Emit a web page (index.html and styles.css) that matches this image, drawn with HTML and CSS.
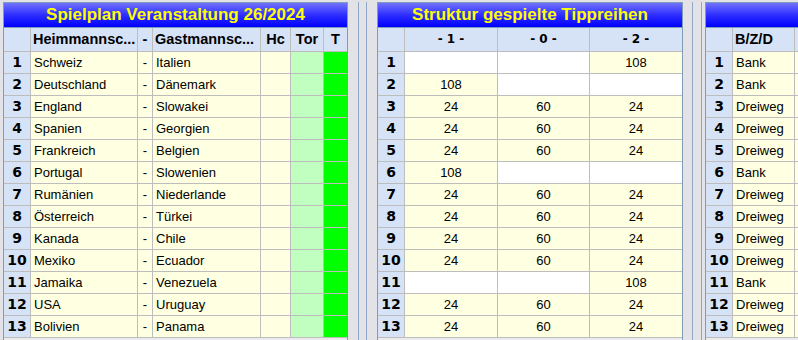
FILE: index.html
```html
<!DOCTYPE html>
<html>
<head>
<meta charset="utf-8">
<link rel="stylesheet" href="styles.css">
</head>
<body>
<div class="desk">
  <div class="panel p1">
    <div class="title">Spielplan Veranstaltung 26/2024</div>
    <div class="grid g1">
      <div class="hd"></div><div class="hd l">Heimmannsc...</div><div class="hd c">-</div><div class="hd l">Gastmannsc...</div><div class="hd c">Hc</div><div class="hd c">Tor</div><div class="hd c">T</div>
      <div class="rn">1</div><div class="y">Schweiz</div><div class="y c">-</div><div class="y">Italien</div><div class="y"></div><div class="lg"></div><div class="gr"></div>
      <div class="rn">2</div><div class="y">Deutschland</div><div class="y c">-</div><div class="y">Dänemark</div><div class="y"></div><div class="lg"></div><div class="gr"></div>
      <div class="rn">3</div><div class="y">England</div><div class="y c">-</div><div class="y">Slowakei</div><div class="y"></div><div class="lg"></div><div class="gr"></div>
      <div class="rn">4</div><div class="y">Spanien</div><div class="y c">-</div><div class="y">Georgien</div><div class="y"></div><div class="lg"></div><div class="gr"></div>
      <div class="rn">5</div><div class="y">Frankreich</div><div class="y c">-</div><div class="y">Belgien</div><div class="y"></div><div class="lg"></div><div class="gr"></div>
      <div class="rn">6</div><div class="y">Portugal</div><div class="y c">-</div><div class="y">Slowenien</div><div class="y"></div><div class="lg"></div><div class="gr"></div>
      <div class="rn">7</div><div class="y">Rumänien</div><div class="y c">-</div><div class="y">Niederlande</div><div class="y"></div><div class="lg"></div><div class="gr"></div>
      <div class="rn">8</div><div class="y">Österreich</div><div class="y c">-</div><div class="y">Türkei</div><div class="y"></div><div class="lg"></div><div class="gr"></div>
      <div class="rn">9</div><div class="y">Kanada</div><div class="y c">-</div><div class="y">Chile</div><div class="y"></div><div class="lg"></div><div class="gr"></div>
      <div class="rn">10</div><div class="y">Mexiko</div><div class="y c">-</div><div class="y">Ecuador</div><div class="y"></div><div class="lg"></div><div class="gr"></div>
      <div class="rn">11</div><div class="y">Jamaika</div><div class="y c">-</div><div class="y">Venezuela</div><div class="y"></div><div class="lg"></div><div class="gr"></div>
      <div class="rn">12</div><div class="y">USA</div><div class="y c">-</div><div class="y">Uruguay</div><div class="y"></div><div class="lg"></div><div class="gr"></div>
      <div class="rn">13</div><div class="y">Bolivien</div><div class="y c">-</div><div class="y">Panama</div><div class="y"></div><div class="lg"></div><div class="gr"></div>
    </div>
  </div>
  <div class="split s1"></div>
  <div class="panel p2">
    <div class="title">Struktur gespielte Tippreihen</div>
    <div class="grid g2">
      <div class="hd"></div><div class="hd sm c">- 1 -</div><div class="hd sm c">- 0 -</div><div class="hd sm c">- 2 -</div>
      <div class="rn">1</div><div class="w"></div><div class="w"></div><div class="y c">108</div>
      <div class="rn">2</div><div class="y c">108</div><div class="w"></div><div class="w"></div>
      <div class="rn">3</div><div class="y c">24</div><div class="y c">60</div><div class="y c">24</div>
      <div class="rn">4</div><div class="y c">24</div><div class="y c">60</div><div class="y c">24</div>
      <div class="rn">5</div><div class="y c">24</div><div class="y c">60</div><div class="y c">24</div>
      <div class="rn">6</div><div class="y c">108</div><div class="w"></div><div class="w"></div>
      <div class="rn">7</div><div class="y c">24</div><div class="y c">60</div><div class="y c">24</div>
      <div class="rn">8</div><div class="y c">24</div><div class="y c">60</div><div class="y c">24</div>
      <div class="rn">9</div><div class="y c">24</div><div class="y c">60</div><div class="y c">24</div>
      <div class="rn">10</div><div class="y c">24</div><div class="y c">60</div><div class="y c">24</div>
      <div class="rn">11</div><div class="w"></div><div class="w"></div><div class="y c">108</div>
      <div class="rn">12</div><div class="y c">24</div><div class="y c">60</div><div class="y c">24</div>
      <div class="rn">13</div><div class="y c">24</div><div class="y c">60</div><div class="y c">24</div>
    </div>
  </div>
  <div class="split s2"></div>
  <div class="panel p3">
    <div class="title"></div>
    <div class="grid g3">
      <div class="hd"></div><div class="hd l">B/Z/D</div><div class="hd"></div>
      <div class="rn">1</div><div class="y">Bank</div><div class="y"></div>
      <div class="rn">2</div><div class="y">Bank</div><div class="y"></div>
      <div class="rn">3</div><div class="y">Dreiweg</div><div class="y"></div>
      <div class="rn">4</div><div class="y">Dreiweg</div><div class="y"></div>
      <div class="rn">5</div><div class="y">Dreiweg</div><div class="y"></div>
      <div class="rn">6</div><div class="y">Bank</div><div class="y"></div>
      <div class="rn">7</div><div class="y">Dreiweg</div><div class="y"></div>
      <div class="rn">8</div><div class="y">Dreiweg</div><div class="y"></div>
      <div class="rn">9</div><div class="y">Dreiweg</div><div class="y"></div>
      <div class="rn">10</div><div class="y">Dreiweg</div><div class="y"></div>
      <div class="rn">11</div><div class="y">Bank</div><div class="y"></div>
      <div class="rn">12</div><div class="y">Dreiweg</div><div class="y"></div>
      <div class="rn">13</div><div class="y">Dreiweg</div><div class="y"></div>
    </div>
  </div>
</div>
</body>
</html>
```
FILE: styles.css
```css
html, body {
  margin: 0;
  padding: 0;
  background: #e3e2e7;
  overflow: hidden;
  width: 798px;
  height: 340px;
}
.desk {
  display: flex;
  align-items: flex-start;
  padding: 2px 0 0 3px;
  font-family: "Liberation Sans", Arial, sans-serif;
  font-size: 13px;
  color: #000;
}
.panel {
  flex: none;
  border: 1px solid #7f9db9;
  border-bottom: none;
  background: #ebebee;
  height: 340px;
  overflow: hidden;
}
.p1 { width: 343px; }
.p2 { width: 304px; }
.p3 { width: 100px; border-right: none; }
.title {
  height: 24px;
  border-bottom: 1px solid #7f9db9;
  background: linear-gradient(#7272ff, #2e2eff 50%, #0000ff);
  color: #ffff00;
  font-weight: bold;
  font-size: 17px;
  line-height: 24px;
  text-align: center;
  white-space: nowrap;
}
.split {
  flex: none;
  height: 340px;
  box-sizing: border-box;
  border-left: 1px solid #8fa8c8;
  border-right: 1px solid #8fa8c8;
}
.s1 { width: 9px; margin: 0 10px 0 10px; }
.s2 { width: 10px; margin: 0 3px 0 9px; }
.grid {
  display: grid;
  gap: 1px;
  background: #bdbdbd;
  grid-template-rows: 23px;
  grid-auto-rows: 21px;
  border-bottom: 1px solid #bdbdbd;
}
.g1 { grid-template-columns: 26px 106px 14px 107px 29px 32px 23px; }
.g2 { grid-template-columns: 26px 92px 91px 92px; }
.g3 { grid-template-columns: 26px 61px 100px; }
.grid > div {
  white-space: nowrap;
  overflow: hidden;
  line-height: 21px;
  padding: 0 3px;
}
.grid > .hd {
  background: #d6e2f6;
  font-weight: bold;
  line-height: 23px;
  font-size: 14.5px;
}
.grid > .hd.l { padding: 0 0 0 2px; }
.grid > .sm {
  font-family: "DejaVu Sans", sans-serif;
  font-size: 12px;
}
.grid > .rn {
  background: #d6e2f6;
  font-family: "DejaVu Sans", sans-serif;
  font-weight: bold;
  text-align: center;
  font-size: 14px;
  padding: 0;
}
.grid > .c { text-align: center; padding: 0; }
.y { background: #ffffe1; }
.w { background: #ffffff; }
.lg { background: #c0ffc0; }
.gr { background: #00ff00; }
```
